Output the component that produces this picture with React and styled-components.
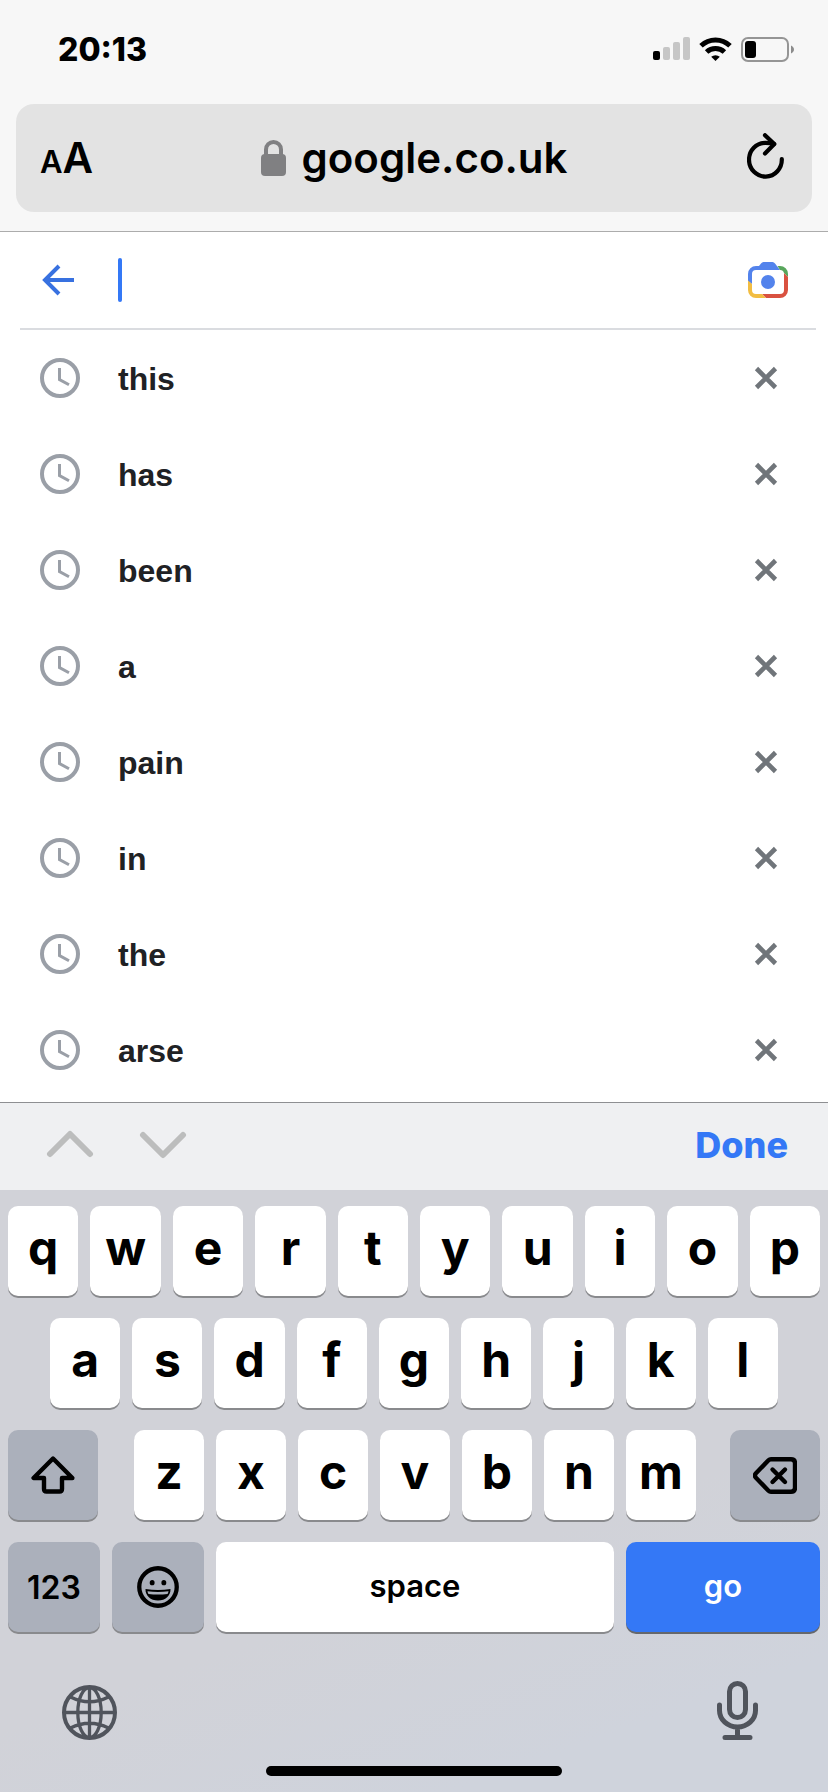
import { useState } from "react";
import styled, { createGlobalStyle } from "styled-components";

const GlobalStyle = createGlobalStyle`
  * {
    box-sizing: border-box;
  }

  body {
    margin: 0;
    background: #ffffff;
    color: #000000;
    font-family: Inter, "Liberation Sans", sans-serif;
  }

  button {
    display: flex;
    align-items: center;
    justify-content: center;
    margin: 0;
    padding: 0;
    border: 0;
    background: none;
    color: inherit;
    font-family: inherit;
    cursor: pointer;
  }

  svg {
    display: block;
    flex: none;
  }
`;

const Screen = styled.div`
  display: flex;
  flex-direction: column;
  min-height: 100vh;
`;

const Header = styled.header`
  padding: 0 16px 19px;
  background: #f7f7f7;
  border-bottom: 1px solid #acacac;
`;

const StatusBar = styled.div`
  display: flex;
  align-items: center;
  justify-content: space-between;
  height: 98px;
  padding: 0 18px 0 42px;
`;

const Clock = styled.time`
  font-size: 32px;
  font-weight: 800;
`;

const StatusIcons = styled.div`
  display: flex;
  align-items: center;
  gap: 9px;
`;

const AddressBar = styled.div`
  display: grid;
  grid-template-columns: 1fr auto 1fr;
  align-items: center;
  height: 108px;
  margin-top: 6px;
  padding: 0 24px;
  border-radius: 18px;
  background: #e3e3e3;
`;

const TextSizeBtn = styled.button`
  && {
    align-items: baseline;
    justify-self: start;
    padding-top: 4px;
    font-weight: 600;
  }
`;

const Letter = styled.span`
  font-size: ${(props) => (props.$large ? "42px" : "31px")};
  line-height: 48px;
`;

const Address = styled.div`
  display: flex;
  align-items: center;
  gap: 16px;
  font-size: 42px;
  font-weight: 600;
  line-height: 54px;
`;

const ReloadBtn = styled.button`
  && {
    justify-self: end;
    padding: 0 4px 4px 0;
  }
`;

const SearchBar = styled.form`
  display: flex;
  align-items: center;
  height: 98px;
  margin: 0 12px 0 20px;
  padding: 0 28px 0 22px;
  border-bottom: 2px solid #dadce0;
`;

const Caret = styled.span`
  width: 4px;
  height: 44px;
  margin-left: 44px;
  border-radius: 2px;
  background: #3478f6;
`;

const SearchInput = styled.input`
  flex: 1;
  min-width: 0;
  height: 60px;
  padding: 0;
  border: 0;
  outline: 0;
  background: none;
  caret-color: transparent;
  font-family: "Liberation Sans", Arial, sans-serif;
  font-size: 32px;
`;

const History = styled.ul`
  flex: 1;
  margin: 0;
  padding: 0 0 4px;
  list-style: none;
`;

const HistoryRow = styled.li`
  display: flex;
  align-items: center;
  height: 96px;
  padding: 0 50px 0 40px;
`;

const HistoryLink = styled.a`
  display: flex;
  flex: 1;
  align-items: center;
  gap: 38px;
  color: #202124;
  font-family: "Liberation Sans", Arial, sans-serif;
  font-size: 32px;
  font-weight: 700;
  line-height: 36px;
  text-decoration: none;

  span {
    padding-top: 2px;
  }
`;

const FormBar = styled.div`
  display: flex;
  align-items: center;
  height: 88px;
  padding: 0 40px 4px 46px;
  border-top: 1px solid #8e8f92;
  background: #eff0f2;
`;

const StepBtn = styled.button`
  && {
    margin-right: 45px;
  }
`;

const DoneBtn = styled.button`
  && {
    margin-left: auto;
    color: #3478f6;
    font-size: 36px;
    font-weight: 800;
  }
`;

const Keyboard = styled.div`
  display: flex;
  flex-direction: column;
  gap: 22px;
  padding: 16px 0;
  background: linear-gradient(160deg, #d1d2d8 60%, #cfd3dc 85%);
`;

const KeyRow = styled.div`
  display: flex;
  gap: 12px;
  padding: 0 ${(props) => props.$inset || 8}px;
`;

const keyColors = {
  light: { background: "#ffffff", color: "#000000", edge: "#898a8d" },
  dark: { background: "#abb0bb", color: "#000000", edge: "#898a8d" },
  blue: { background: "#3478f6", color: "#ffffff", edge: "#66686c" },
};

const Key = styled.button`
  && {
    flex: ${(props) => (props.$width ? `0 0 ${props.$width}px` : "1 1 0")};
    min-width: 0;
    height: 90px;
    border-radius: 10px;
    background: ${(props) => keyColors[props.$tone || "light"].background};
    box-shadow: 0 2px 0 ${(props) => keyColors[props.$tone || "light"].edge};
    color: ${(props) => keyColors[props.$tone || "light"].color};
  }
`;

const LetterKey = styled(Key)`
  && {
    padding-bottom: 8px;
    font-size: 48px;
    font-weight: 700;
  }
`;

const WordKey = styled(Key)`
  && {
    padding-bottom: ${(props) => (props.$digits ? "0" : "4px")};
    font-size: ${(props) => (props.$digits ? "32px" : "31px")};
    font-weight: 600;
  }
`;

const Letters = styled.div`
  display: flex;
  flex: 1;
  gap: 12px;
  margin: 0 22px 0 24px;
`;

const KeyboardFooter = styled.div`
  display: flex;
  align-items: flex-end;
  justify-content: space-between;
  margin-top: 27px;
  padding: 0 70px 0 62px;
  color: #50545c;
`;

const HomeIndicator = styled.div`
  align-self: center;
  width: 296px;
  height: 10px;
  margin-top: 4px;
  border-radius: 5px;
  background: #000000;
`;

const SignalIcon = () => (
  <svg width="37" height="24" viewBox="0 0 37 24" aria-hidden="true">
    <rect x="0" y="14" width="7" height="9" rx="2" />
    <rect x="10" y="10" width="7" height="13" rx="2" fill="#c6c6c6" />
    <rect x="20" y="5" width="7" height="18" rx="2" fill="#c6c6c6" />
    <rect x="30" y="0" width="7" height="23" rx="2" fill="#c6c6c6" />
  </svg>
);

const WifiIcon = () => (
  <svg width="33" height="24" viewBox="0 0 33 24" aria-hidden="true">
    <g fill="none" stroke="#000" strokeWidth="5">
      <path d="M2 8.700a21 21 0 0 1 29 0" />
      <path d="M7.600 15a13 13 0 0 1 17.800 0" />
    </g>
    <path d="M12.200 19.800a6.600 6.600 0 0 1 8.600 0L16.500 24z" />
  </svg>
);

const BatteryIcon = () => (
  <svg width="53" height="25" viewBox="0 0 53 25" aria-hidden="true">
    <rect x="1" y="1" width="46" height="23" rx="6" fill="none" stroke="#959595" strokeWidth="2" />
    <rect x="4" y="4" width="11" height="17" rx="3" />
    <path d="M50 8.500c1.800.8 3 2.300 3 4s-1.200 3.200-3 4z" fill="#8c8c8c" />
  </svg>
);

const LockIcon = () => (
  <svg width="25" height="36" viewBox="0 0 25 36" aria-hidden="true">
    <rect x="0" y="14" width="25" height="22" rx="4" fill="#808082" />
    <path d="M5 15V9.500a7.500 7.500 0 0 1 15 0V15" fill="none" stroke="#808082" strokeWidth="4" />
  </svg>
);

const ReloadIcon = () => (
  <svg width="37" height="46" viewBox="0 0 37 46" fill="none" stroke="#000" strokeWidth="4.200" strokeLinecap="round" strokeLinejoin="round">
    <path d="M34.800 26A16.400 16.900 0 1 1 18.500 9.800c3.200 0 6 .3 8.500 1.200" />
    <path d="M18 2.200l9.300 8.900L18 20.400" />
  </svg>
);

const BackIcon = () => (
  <svg width="32" height="32" viewBox="0 0 32 32" fill="none" stroke="#3871e0" strokeWidth="4">
    <path d="M17 2L3 16l14 14M3 16h29" />
  </svg>
);

const LensIcon = () => (
  <svg width="40" height="36" viewBox="0 0 40 36">
    <path d="M0 19V12a8 8 0 0 1 8-8h3l2-2.500Q14 0 15.500 0h9Q26 0 27 1.500L32 8H8a4 4 0 0 0-4 4v10z" fill="#5383ec" />
    <path d="M29.500 4H32a8 8 0 0 1 8 8v3l-4-4a4 4 0 0 0-4-3z" fill="#58a65c" />
    <path d="M36 11l4 4v13a8 8 0 0 1-8 8H18l-4-4h18a4 4 0 0 0 4-4z" fill="#d95140" />
    <path d="M0 18.500L4 22v6a4 4 0 0 0 4 4h6l4 4H8a8 8 0 0 1-8-8z" fill="#f2bd42" />
    <circle cx="20" cy="20" r="7" fill="#5383ec" />
  </svg>
);

const ClockIcon = () => (
  <svg width="40" height="40" viewBox="0 0 40 40" fill="none" stroke="#9a9fa7" aria-hidden="true">
    <circle cx="20" cy="20" r="18" strokeWidth="4" />
    <path d="M19.500 10v11.500l9.500 5.300" strokeWidth="3" />
  </svg>
);

const CloseIcon = () => (
  <svg width="24" height="24" viewBox="0 0 24 24" fill="none" stroke="#70757a" strokeWidth="4.600">
    <path d="M2.500 2.500l19 19M21.500 2.500l-19 19" />
  </svg>
);

const ChevronIcon = ({ down }) => (
  <svg width="48" height="30" viewBox="0 0 48 30" fill="none" stroke="#bcbdbd" strokeWidth="6" strokeLinecap="round" strokeLinejoin="round">
    <path d={down ? "M4 5l20 20L44 5" : "M4 24L24 4l20 20"} />
  </svg>
);

const ShiftIcon = () => (
  <svg width="44" height="38" viewBox="0 0 44 38" fill="none" stroke="#000" strokeWidth="4.400" strokeLinejoin="round">
    <path d="M22 2.500L2.600 22H13V33q0 2.500 2.500 2.500h13Q31 35.500 31 33V22h10.400z" />
  </svg>
);

const BackspaceIcon = () => (
  <svg width="44" height="37" viewBox="0 0 44 37" fill="none" stroke="#000" strokeWidth="4.400" strokeLinecap="round" strokeLinejoin="round">
    <path d="M18 2.200h20q4 0 4 4v24.600q0 4-4 4H18q-1.500 0-2.500-1L2.700 20.500q-1.500-2 0-4L15.500 3.200q1-1 2.500-1z" />
    <path d="M19.500 12.500l12.500 12.500M32 12.500L19.500 25" />
  </svg>
);

const EmojiIcon = () => (
  <svg width="42" height="42" viewBox="0 0 41 41">
    <circle cx="20.500" cy="20.500" r="18.300" fill="none" stroke="#000" strokeWidth="4.200" />
    <ellipse cx="14.800" cy="16.300" rx="2.400" ry="2.600" />
    <ellipse cx="26.200" cy="16.300" rx="2.400" ry="2.600" />
    <path d="M8.300 22.500q12.200 1.800 24.400 0c.3 6.500-5 11.300-12.200 11.300S8 29 8.300 22.500z" />
    <path d="M10.200 24.700q10.300 1.600 20.600 0-.3 1.500-1 2.600-9.300 1.200-18.600 0-.7-1.100-1-2.600z" fill="#abb0bb" />
  </svg>
);

const GlobeIcon = () => (
  <svg width="55" height="55" viewBox="0 0 55 55" fill="none" stroke="currentColor" strokeWidth="3.300">
    <circle cx="27.500" cy="27.500" r="25.500" strokeWidth="4" />
    <ellipse cx="27.500" cy="27.500" rx="11.700" ry="25" />
    <path d="M27.500 2v51M2 27.500h51M8.500 12q19 9.500 38 0M8.500 43q19-9.500 38 0" />
  </svg>
);

const MicIcon = () => (
  <svg width="41" height="59" viewBox="0 0 41 59" fill="none" stroke="currentColor" strokeWidth="5" strokeLinecap="round">
    <rect x="12.500" y="2.500" width="16" height="34" rx="8" />
    <path d="M2.500 24v5.500a18 16.500 0 0 0 36 0V24M20.500 46.500v9M8 56.500h25" />
  </svg>
);

const searches = ["this", "has", "been", "a", "pain", "in", "the", "arse"];

const App = () => {
  const [items, setItems] = useState(searches);
  const [query, setQuery] = useState("");

  const type = (char) => setQuery(query + char);
  const remove = (name) => setItems(items.filter((item) => item !== name));

  const renderLetters = (letters) =>
    letters.split("").map((char) => (
      <LetterKey key={char} type="button" onClick={() => type(char)}>
        {char}
      </LetterKey>
    ));

  return (
    <Screen>
      <GlobalStyle />
      <Header>
        <StatusBar>
          <Clock>20:13</Clock>
          <StatusIcons>
            <SignalIcon />
            <WifiIcon />
            <BatteryIcon />
          </StatusIcons>
        </StatusBar>
        <AddressBar>
          <TextSizeBtn type="button" aria-label="Text size">
            <Letter>A</Letter>
            <Letter $large>A</Letter>
          </TextSizeBtn>
          <Address>
            <LockIcon />
            <span>google.co.uk</span>
          </Address>
          <ReloadBtn type="button" aria-label="Reload">
            <ReloadIcon />
          </ReloadBtn>
        </AddressBar>
      </Header>

      <SearchBar onSubmit={(e) => e.preventDefault()}>
        <button type="button" aria-label="Back">
          <BackIcon />
        </button>
        <Caret />
        <SearchInput
          type="text"
          aria-label="Search"
          value={query}
          onChange={(e) => setQuery(e.target.value)}
        />
        <button type="button" aria-label="Search by image">
          <LensIcon />
        </button>
      </SearchBar>

      <History>
        {items.map((item) => (
          <HistoryRow key={item}>
            <HistoryLink href={`#${item}`}>
              <ClockIcon />
              <span>{item}</span>
            </HistoryLink>
            <button type="button" aria-label={`Remove ${item}`} onClick={() => remove(item)}>
              <CloseIcon />
            </button>
          </HistoryRow>
        ))}
      </History>

      <FormBar>
        <StepBtn type="button" aria-label="Previous field">
          <ChevronIcon />
        </StepBtn>
        <StepBtn type="button" aria-label="Next field">
          <ChevronIcon down />
        </StepBtn>
        <DoneBtn type="button">Done</DoneBtn>
      </FormBar>

      <Keyboard>
        <KeyRow>{renderLetters("qwertyuiop")}</KeyRow>
        <KeyRow $inset={50}>{renderLetters("asdfghjkl")}</KeyRow>
        <KeyRow>
          <Key type="button" $tone="dark" $width={90} aria-label="Shift">
            <ShiftIcon />
          </Key>
          <Letters>{renderLetters("zxcvbnm")}</Letters>
          <Key
            type="button"
            $tone="dark"
            $width={90}
            aria-label="Delete"
            onClick={() => setQuery(query.slice(0, -1))}
          >
            <BackspaceIcon />
          </Key>
        </KeyRow>
        <KeyRow>
          <WordKey type="button" $tone="dark" $width={92} $digits>
            123
          </WordKey>
          <Key type="button" $tone="dark" $width={92} aria-label="Emoji">
            <EmojiIcon />
          </Key>
          <WordKey type="button" onClick={() => type(" ")}>
            space
          </WordKey>
          <WordKey type="button" $tone="blue" $width={194}>
            go
          </WordKey>
        </KeyRow>
        <KeyboardFooter>
          <button type="button" aria-label="Next keyboard">
            <GlobeIcon />
          </button>
          <button type="button" aria-label="Dictate">
            <MicIcon />
          </button>
        </KeyboardFooter>
        <HomeIndicator />
      </Keyboard>
    </Screen>
  );
};

export default App;
